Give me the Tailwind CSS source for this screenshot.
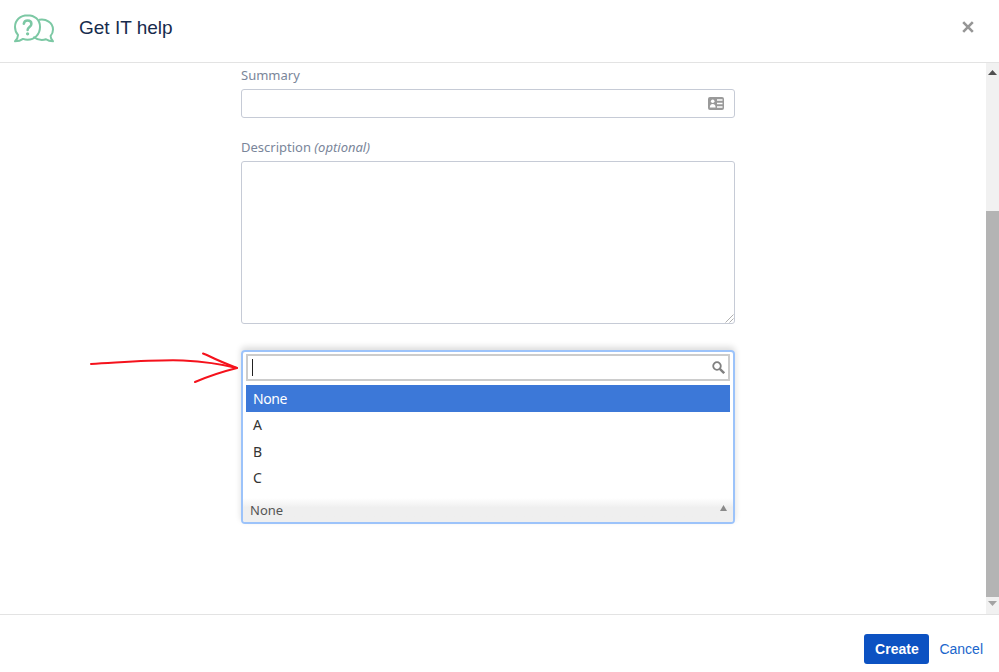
<!DOCTYPE html>
<html lang="en">
<head>
  <meta charset="UTF-8" />
  <title>Get IT help</title>
  <script src="https://cdn.jsdelivr.net/npm/@tailwindcss/browser@4"></script>
</head>
<body class="relative w-[999px] h-[672px] overflow-hidden bg-white font-['Liberation_Sans',sans-serif]">

  <!-- header -->
  <header class="h-[63px] flex items-center border-b border-[#e3e3e3]">
    <svg class="ml-[13px] mb-[5px]" width="42" height="30" viewBox="0 0 42 30" fill="none" stroke="#7cc8a4" stroke-width="2" stroke-linejoin="round" stroke-linecap="round">
      <path d="M14.500 1.200C7.400 1.200 2 6.300 2 13c0 3 1.100 5.800 3 7.900 0 2.200-1 4.400-3 6.400 3.400 0 6-.9 8-2.400 1.400.5 2.900.8 4.500.8 7.100 0 12.500-5.400 12.500-12.700S21.600 1.200 14.500 1.200z"/>
      <path d="M26.500 5.800c6.500-1 13.500 2.500 13.500 9.700 0 2.500-.9 4.800-2.400 6.400 0 2 .9 3.900 2.400 5.400-3 0-5.300-.8-7-2-1.300.5-2.800.7-4.200.7-3 0-5.700-1-7.800-2.700"/>
      <path d="M10.800 9.800c.3-2 1.800-3.200 3.800-3.200 2.200 0 3.800 1.400 3.800 3.300 0 3-3.800 3-3.800 6" stroke-width="2.500"/>
      <circle cx="14.600" cy="19.800" r=".8" stroke-width="1.700"/>
    </svg>
    <h1 class="ml-[24px] mb-[8px] text-[19px] leading-none text-[#172b4d]">Get IT help</h1>
    <svg class="ml-auto mr-[25px] mb-[9px]" width="12" height="12" viewBox="0 0 12 12" stroke="#969696" stroke-width="2.600">
      <path d="M1.200 1.200l9.600 9.600M10.800 1.200l-9.600 9.600"/>
    </svg>
  </header>

  <!-- scrolling body -->
  <div class="h-[551px] flex">
    <main class="flex-1 pl-[241px] pt-[4px]">
      <div class="w-[494px] font-['Noto_Sans',sans-serif] text-[13px] text-[#7a869a]">
        <label class="block h-[22px] leading-[16px]">Summary</label>
        <div class="h-[29px] border border-[#c6cbd6] rounded-[3px] flex items-center justify-end pr-[10px]">
          <svg width="16" height="13" viewBox="0 0 16 13">
            <rect width="16" height="13" rx="2" fill="#9a9a9a"/>
            <circle cx="4.700" cy="4.300" r="1.800" fill="#fff"/>
            <path d="M1.800 10.500c0-2.300 1-3.500 2.900-3.500s2.900 1.200 2.900 3.500z" fill="#fff"/>
            <path d="M9 3h5.500M9 6.500h5.500M9 10h5.500" stroke="#fff" stroke-width="1.300"/>
          </svg>
        </div>
        <label class="block h-[22px] mt-[21px] leading-[16px]">Description <em>(optional)</em></label>
        <div class="relative h-[163px] border border-[#c6cbd6] rounded-[3px]">
          <svg class="absolute right-0 bottom-0" width="9" height="9" viewBox="0 0 9 9" stroke="#b0b0b0" stroke-width="1">
            <path d="M8.500 .5L.5 8.500M8.500 4.500L4.500 8.500"/>
          </svg>
        </div>

        <!-- open select -->
        <div class="mt-[26px] h-[174px] border-2 border-[#9cc3fa] rounded-[4px] flex flex-col shadow-[0_-3px_6px_rgba(0,0,0,0.14)]">
          <div class="px-[3px] pt-[2px]">
            <div class="h-[27px] border-2 border-[#cccccc] flex items-center justify-between pl-[4px] pr-[3px]">
              <span class="w-px h-[17px] bg-[#222]"></span>
              <svg width="13" height="13" viewBox="0 0 13 13" fill="none" stroke="#808080">
                <circle cx="5" cy="5" r="3.800" stroke-width="1.800"/>
                <path d="M7.800 7.800l4.400 4.400" stroke-width="2.400"/>
              </svg>
            </div>
          </div>
          <ul class="mx-[3px] mt-[4px] text-[14px] tracking-[-0.4px] text-[#333]">
            <li class="h-[27px] leading-[27px] pl-[7px] bg-[#3c78d8] text-white">None</li>
            <li class="h-[26.500px] leading-[26.500px] pl-[7px]">A</li>
            <li class="h-[26.500px] leading-[26.500px] pl-[7px]">B</li>
            <li class="h-[26.500px] leading-[26.500px] pl-[7px]">C</li>
          </ul>
          <div class="mt-auto h-[24px] pt-[2px] rounded-b-[2px] flex items-center justify-between pl-[7px] pr-[6px] bg-gradient-to-b from-white to-[#efefef] to-40% text-[13px] text-[#555]">
            <span>None</span>
            <svg class="mb-[7px]" width="7" height="6" viewBox="0 0 7 6"><path d="M3.500 0L7 6H0z" fill="#8a8a8a"/></svg>
          </div>
        </div>
      </div>
    </main>

    <!-- scrollbar -->
    <div class="w-[13px] bg-[#f1f1f1] flex flex-col items-center">
      <svg class="mt-[7px]" width="9" height="5" viewBox="0 0 9 5"><path d="M4.500 0L9 5H0z" fill="#505050"/></svg>
      <div class="mt-[136px] w-full h-[386px] bg-[#b4b4b4]"></div>
      <svg class="mt-[4px]" width="9" height="5" viewBox="0 0 9 5"><path d="M0 0h9L4.500 5z" fill="#a3a3a3"/></svg>
    </div>
  </div>

  <!-- footer -->
  <footer class="h-[58px] border-t border-[#e3e3e3] pt-[11px] flex items-center justify-end pr-[16px] gap-[10px] text-[14px]">
    <button class="w-[65px] h-[30px] bg-[#0c52c2] rounded-[3px] text-white font-bold">Create</button>
    <a class="text-[#1a66cc]">Cancel</a>
  </footer>

  <!-- hand drawn arrow annotation -->
  <svg class="absolute left-[88px] top-[348px]" width="152" height="40" viewBox="0 0 152 40" fill="none" stroke="#f5121c" stroke-width="2" stroke-linecap="round" stroke-linejoin="round">
    <path d="M3 16C40 14 68 11.500 95 12.500c20 1 38 3.500 54 7.500"/>
    <path d="M115 5.500c3 1 4 1.500 7 3 8 4 18 8 27 11.500-12 3-28 8-42 14"/>
  </svg>

</body>
</html>
